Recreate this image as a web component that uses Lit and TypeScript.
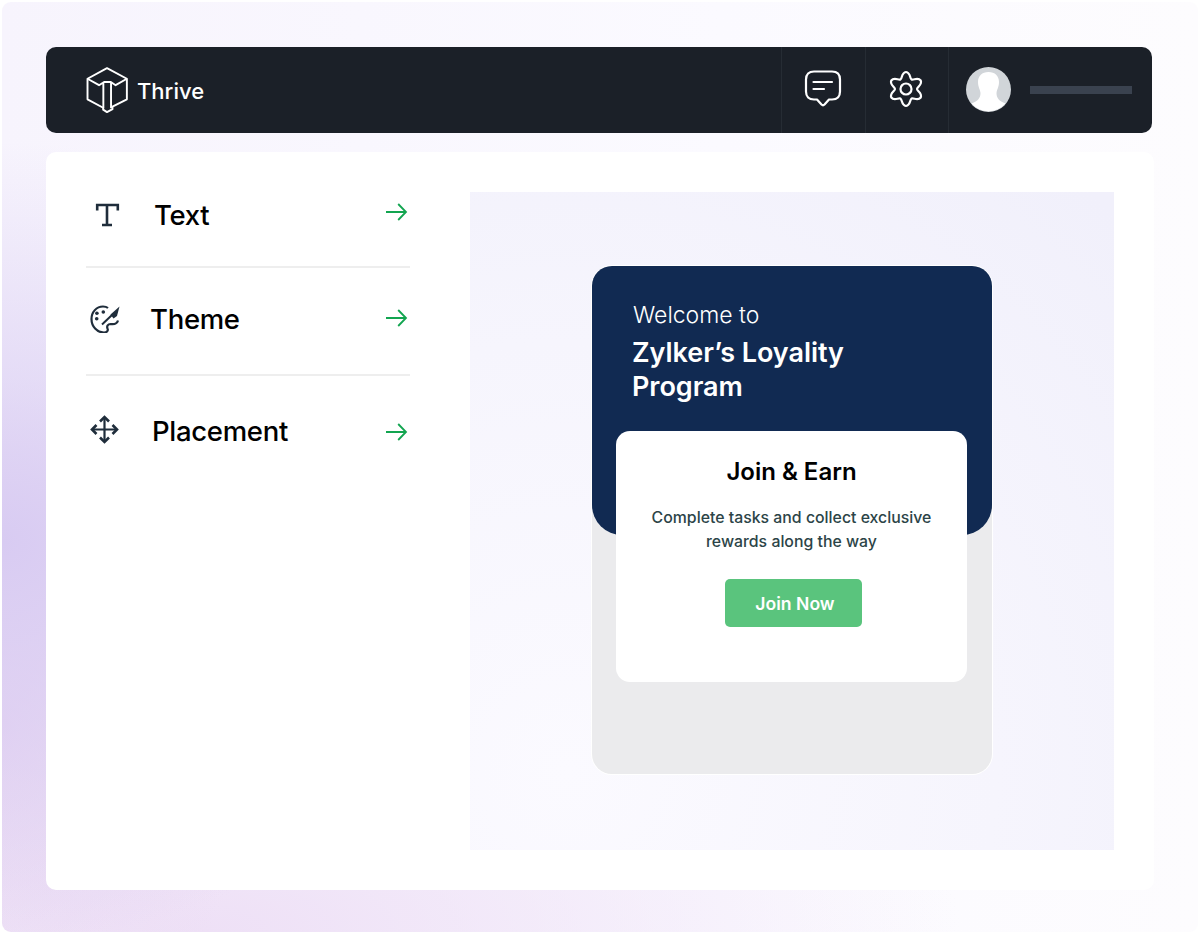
import { LitElement, html, css, svg } from "lit";
import { customElement } from "lit/decorators.js";

const arrow = html`<svg class="arrow" width="24" height="20" viewBox="0 0 24 20" fill="none" stroke="#12a550" stroke-width="1.8">
  <path d="M2 10H22M14.2 2L22 10L14.2 18" />
</svg>`;

const logo = html`<svg width="44" height="48" viewBox="0 0 44 50" fill="none" stroke="#fff" stroke-width="2" stroke-linejoin="round">
  <path d="M22 2.3L42.7 13.3V34.7L27.7 42.3V45L22 48L18 45.5V43.5L1.7 34.7V13.3Z" />
  <path d="M1.7 13.3L13.7 20L19 16.7H26L31 20L42.7 13.3M18.2 16.7V44M26.2 16.7V44" />
</svg>`;

// six lobed gear outline around (18,19)
const gearPath = (() => {
  const c = 18, d = 19, tip = 17, notch = 11;
  const pt = (r: number, deg: number) => {
    const a = (deg * Math.PI) / 180;
    return [c + r * Math.cos(a), d - r * Math.sin(a)];
  };
  const f = (p: number[]) => `${p[0].toFixed(2)} ${p[1].toFixed(2)}`;
  let out = `M${f(pt(notch, 120))}`;
  for (let k = 0; k < 6; k++) {
    const a = 90 - 60 * k;
    // halfway control points, tangents run round the circle
    out += `C${f(pt(notch + 0.5, a + 18))} ${f(pt(tip, a + 16))} ${f(pt(tip, a))}`;
    out += `C${f(pt(tip, a - 16))} ${f(pt(notch + 0.5, a - 18))} ${f(pt(notch, a - 30))}`;
  }
  return out + "Z";
})();

const items = [
  {
    label: "Text",
    cls: "text",
    icon: svg`<path d="M7.2 11.5V6H27.8V11.5M17 6V26M12 26H22" stroke="#1f2d3b" stroke-width="2.6" fill="none"/>`,
  },
  {
    label: "Theme",
    cls: "theme",
    icon: svg`<path d="M18 5C16.5 3.8 14.5 3.5 13 3.5C6.5 3.5 1.5 9 1.5 16C1.5 23.5 7 29.5 14 29.5C17 29.5 18.5 27.5 17.5 25.5C16.5 23 18 21 20.5 21C24 21.5 27 21 28 17.5" stroke="#1f2d3b" stroke-width="2.2" fill="none"/>
      <path d="M12 21.5L22 12" stroke="#1f2d3b" stroke-width="2" fill="none"/>
      <path d="M20.5 11.5L29.5 3.5L27 13L23.5 15.5Z" fill="#1f2d3b"/>
      <circle cx="13.3" cy="9" r="1.8" fill="#1f2d3b"/><circle cx="6.9" cy="10.2" r="1.8" fill="#1f2d3b"/><circle cx="6.7" cy="15.8" r="1.8" fill="#1f2d3b"/>`,
  },
  {
    label: "Placement",
    cls: "placement",
    icon: svg`<path d="M14.5 2V27M2 14.5H27" stroke="#1f2d3b" stroke-width="2.2" fill="none"/>
      <path d="M10 6.5L14.5 2L19 6.5M10 22.5L14.5 27L19 22.5M6.5 10L2 14.5L6.5 19M22.5 10L27 14.5L22.5 19" stroke="#1f2d3b" stroke-width="2.6" fill="none"/>`,
  },
];

@customElement("app-root")
export class AppRoot extends LitElement {
  static styles = css`
    :host {
      display: block;
      background: #fff;
      font-family: Inter, "Liberation Sans", sans-serif;
      color: #000;
    }
    .frame {
      box-sizing: border-box;
      width: 1196px;
      height: 930px;
      margin: 2px 0 0 2px;
      padding: 45px 44px 42px 44px;
      border-radius: 9px;
      display: flex;
      flex-direction: column;
      gap: 19px;
      background:
        radial-gradient(480px 400px at 0 540px, #d8cbf2 0%, rgba(216, 203, 242, 0) 100%),
        radial-gradient(260px 340px at 0 720px, #e8d7f2 0%, rgba(232, 215, 242, 0) 100%),
        radial-gradient(760px 300px at 200px 930px, #eee0f6 0%, rgba(238, 224, 246, 0) 100%),
        linear-gradient(90deg, #f7f4fd 0%, #fbfaff 60%, #fdfcfe 100%);
    }
    .nav {
      flex: none;
      width: 1106px;
      height: 86px;
      border-radius: 10px;
      background: #1b2028;
      display: flex;
      align-items: stretch;
    }
    .brand {
      flex: 1;
      display: flex;
      align-items: center;
      gap: 8px;
      padding-left: 39px;
      color: #fff;
      font-size: 22px;
      font-weight: 500;
    }
    .brand span {
      margin-top: 2px;
    }
    .navcell {
      width: 84px;
      border-left: 1px solid #262c34;
      display: flex;
      align-items: center;
      justify-content: center;
      box-sizing: border-box;
    }
    .navcell.gear {
      width: 83px;
    }
    .navcell svg {
      margin: -3px 2px 0 0;
    }
    .user {
      width: 204px;
      border-left: 1px solid #262c34;
      box-sizing: border-box;
      display: flex;
      align-items: center;
      gap: 19px;
      padding-left: 17px;
    }
    .user svg {
      margin-top: -1px;
    }
    .bar {
      width: 102px;
      height: 8px;
      background: #3a424f;
    }
    .main {
      flex: 1;
      width: 1108px;
      border-radius: 10px;
      background: #fff;
      display: flex;
      padding: 40px;
      box-sizing: border-box;
    }
    .menu {
      width: 324px;
      margin-right: 60px;
    }
    .row {
      height: 44px;
      display: flex;
      align-items: center;
      font-size: 27.5px;
      font-weight: 550;
      letter-spacing: -0.3px;
    }
    .row.text {
      padding-bottom: 30px;
      border-bottom: 2px solid #eeeeee;
    }
    .row.theme {
      padding: 28px 0 34px;
      border-bottom: 2px solid #eeeeee;
    }
    .row.placement {
      padding-top: 32px;
    }
    .row svg.icon {
      flex: none;
      width: 30px;
      height: 30px;
      margin-left: 4px;
    }
    .row span {
      flex: 1;
      margin-top: 1px;
    }
    .row.text span { margin-left: 34px; }
    .row.theme span { margin-left: 30px; }
    .row.placement span { margin-left: 32px; }
    .arrow { margin-right: 2px; }
    .row.text .arrow { margin-top: -4px; }
    .row.placement .arrow { margin-top: 4px; }
    .preview {
      width: 644px;
      height: 658px;
      box-sizing: border-box;
      padding-top: 74px;
      display: flex;
      justify-content: center;
      background: radial-gradient(780px 780px at 15% 88%, #fbfaff 0%, #f6f5fd 55%, #f1f0fb 100%);
    }
    .phone {
      width: 400px;
      height: 508px;
      border-radius: 20px;
      background: #ebebed;
      box-shadow: 0 0 0 1px #fff;
      position: relative;
    }
    .hero {
      height: 269px;
      border-radius: 20px 20px 30px 30px;
      background: #112a52;
      color: #fff;
      box-sizing: border-box;
      padding: 34px 41px;
    }
    .hero .welcome {
      font-size: 23px;
      font-weight: 300;
      line-height: 30px;
    }
    .hero h1 {
      margin: 6px 0 0 -1px;
      font-size: 27px;
      line-height: 34px;
      font-weight: 600;
      letter-spacing: -0.05px;
      width: 260px;
    }
    .card {
      position: absolute;
      left: 24px;
      top: 165px;
      width: 351px;
      height: 251px;
      box-sizing: border-box;
      background: #fff;
      border-radius: 14px;
      display: flex;
      flex-direction: column;
      align-items: center;
      padding-top: 26px;
    }
    .card h2 {
      margin: 0;
      font-size: 24px;
      line-height: 30px;
      font-weight: 600;
    }
    .card p {
      margin: 19px 0 0;
      font-size: 15.85px;
      line-height: 24px;
      text-align: center;
      font-weight: 500;
      color: #2c4447;
    }
    .cta {
      margin: 25px 0 0 4px;
      width: 137px;
      height: 48px;
      border-radius: 5px;
      background: #5ac47d;
      color: #fff;
      display: flex;
      align-items: center;
      justify-content: center;
      padding-left: 3px;
      box-sizing: border-box;
      font-size: 17.6px;
      font-weight: 600;
    }
  `;

  render() {
    return html`
      <div class="frame">
        <header class="nav">
          <div class="brand">${logo}<span>Thrive</span></div>
          <div class="navcell">
            <svg width="38" height="38" viewBox="0 0 38 38" fill="none" stroke="#fff" stroke-width="2.2" stroke-linejoin="round" stroke-linecap="round">
              <path d="M10 1.5H28C33 1.5 36 4.5 36 9.5V21.5C36 26.5 33 29.5 28 29.5H25L20.5 34.5C19.7 35.3 18.3 35.3 17.5 34.5L13 29.5H10C5 29.5 2 26.5 2 21.5V9.5C2 4.5 5 1.5 10 1.5Z" />
              <path d="M9.5 12H28M9.5 19H20" />
            </svg>
          </div>
          <div class="navcell gear">
            <svg width="36" height="38" viewBox="0 0 36 38" fill="none" stroke="#fff" stroke-width="2.2" stroke-linejoin="round">
              <path d="${gearPath}" />
              <circle cx="18" cy="19" r="5.5" />
            </svg>
          </div>
          <div class="user">
            <svg width="45" height="45" viewBox="0 0 45 45">
              <circle cx="22.5" cy="22.5" r="22.5" fill="#d1d5d9" />
              <path d="M22.5 5C29 5 33 9 33 15C33 20 31 22 30.5 26C30.5 31 33 34 39.5 36.5A22.5 22.5 0 0 1 5.5 36.5C12 34 14.5 31 14.5 26C14 22 12 20 12 15C12 9 16 5 22.5 5Z" fill="#fff" />
            </svg>
            <div class="bar"></div>
          </div>
        </header>
        <section class="main">
          <div class="menu">
            ${items.map(
              (it) => html`<div class="row ${it.cls}">
                <svg class="icon" viewBox="0 0 30 30">${it.icon}</svg>
                <span>${it.label}</span>
                ${arrow}
              </div>`
            )}
          </div>
          <div class="preview">
            <div class="phone">
              <div class="hero">
                <div class="welcome">Welcome to</div>
                <h1>Zylker’s Loyality Program</h1>
              </div>
              <div class="card">
                <h2>Join &amp; Earn</h2>
                <p>Complete tasks and collect exclusive<br />rewards along the way</p>
                <div class="cta">Join Now</div>
              </div>
            </div>
          </div>
        </section>
      </div>
    `;
  }
}
